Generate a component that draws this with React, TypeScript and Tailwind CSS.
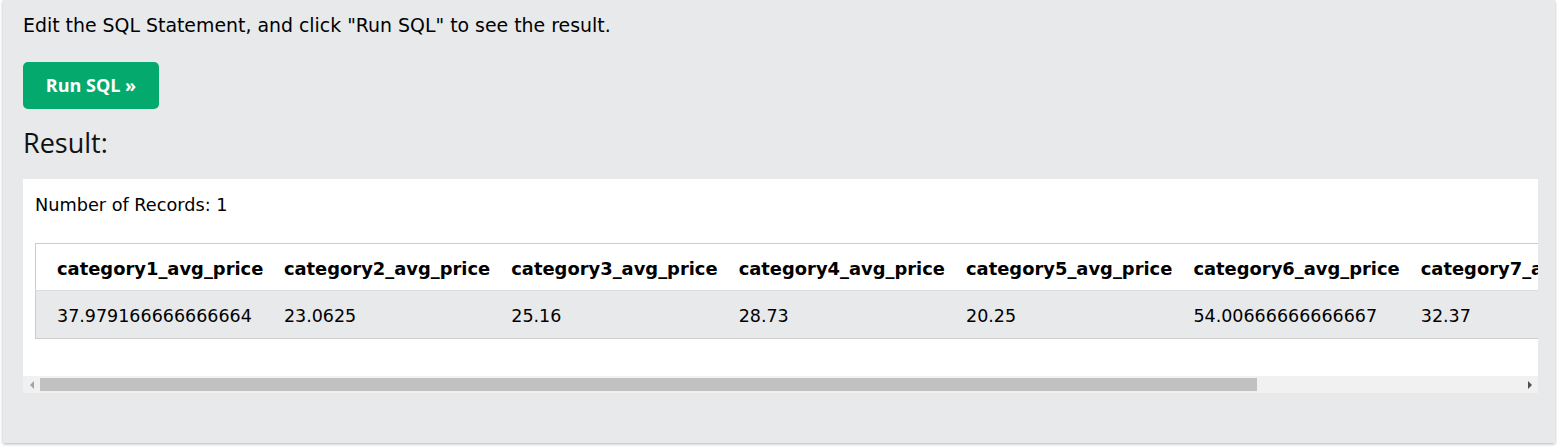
import React from "react";

const cols = [1, 2, 3, 4, 5, 6, 7, 8].map((n) => `category${n}_avg_price`);
const vals = [
  "37.979166666666664",
  "23.0625",
  "25.16",
  "28.73",
  "20.25",
  "54.00666666666667",
  "32.37",
  "41.5",
];

export default function App() {
  return (
    <div className="w-[1557px] h-[448px] bg-white pl-[3px] overflow-hidden">
      <div
        className="w-[1552px] h-[443px] bg-[#e7e9eb] shadow-[0_1px_3px_rgba(0,0,0,0.3)] pl-[20px] pr-[17px] pt-[13px]"
        style={{ fontFamily: '"DejaVu Sans", Verdana, sans-serif' }}
      >
        <div className="text-[18.9px] leading-[24px] text-black">
          Edit the SQL Statement, and click "Run SQL" to see the result.
        </div>
        <div className="mt-[25px]">
          <button
            className="w-[136px] h-[47px] rounded-[5px] bg-[#04aa6d] text-white text-[18px] font-bold"
            style={{ fontFamily: '"Open Sans", sans-serif' }}
          >
            Run SQL »
          </button>
        </div>
        <div
          className="mt-[16px] text-[27px] leading-[36px] font-normal text-[#111111]"
          style={{ fontFamily: '"Open Sans", sans-serif' }}
        >
          Result:
        </div>
        <div className="mt-[18px] w-[1515px] bg-white">
          <div className="h-[197px] overflow-hidden pt-[15px] pl-[12px]">
            <div className="text-[17.7px] leading-[22px] text-black">Number of Records: 1</div>
            <table className="mt-[27px] border-collapse border border-[#cccccc] table-fixed w-[1820px] text-[17.5px] text-black">
              <colgroup>
                {cols.map((c) => (
                  <col key={c} className="w-[227.3px]" />
                ))}
              </colgroup>
              <thead>
                <tr className="h-[47px] bg-white border-b border-[#dddddd]">
                  {cols.map((c) => (
                    <th key={c} className="text-left font-bold text-[17.9px] pl-[21px] pt-[4px] whitespace-nowrap">
                      {c}
                    </th>
                  ))}
                </tr>
              </thead>
              <tbody>
                <tr className="h-[48px] bg-[#e7e9eb]">
                  {vals.map((v, i) => (
                    <td key={i} className="pl-[21px] pt-[4px] whitespace-nowrap">
                      {v}
                    </td>
                  ))}
                </tr>
              </tbody>
            </table>
          </div>
          <div className="h-[17px] bg-[#f1f1f1] flex items-center relative">
            <div className="w-[17px] h-[17px] flex items-center justify-center">
              <div className="w-0 h-0 border-y-[4px] border-y-transparent border-r-[4px] border-r-[#a3a3a3]" />
            </div>
            <div className="w-[1217px] h-[13px] bg-[#c1c1c1]" />
            <div className="flex-1" />
            <div className="w-[17px] h-[17px] flex items-center justify-center">
              <div className="w-0 h-0 border-y-[4px] border-y-transparent border-l-[4px] border-l-[#505050]" />
            </div>
          </div>
        </div>
      </div>
    </div>
  );
}
